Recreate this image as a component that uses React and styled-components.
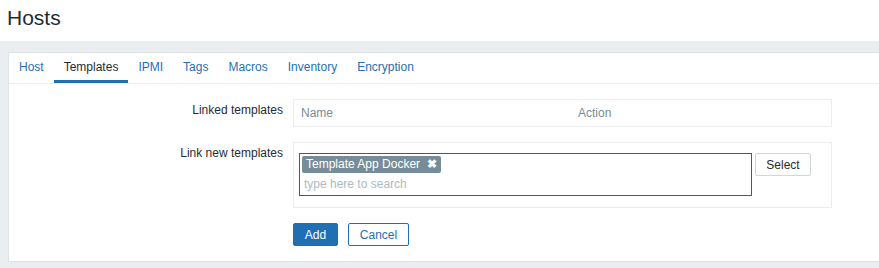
import React, { useState } from 'react';
import styled, { createGlobalStyle } from 'styled-components';

const GlobalStyle = createGlobalStyle`
	html, body {
		margin: 0;
		padding: 0;
		background: #ffffff;
		font-family: 'Liberation Sans', Arial, sans-serif;
		font-size: 12px;
		color: #1f2c33;
		overflow: hidden;
	}
`;

const Header = styled.header`
	padding: 6px 0 11px 7px;
	background: #ffffff;
`;

const Title = styled.h1`
	margin: 0;
	font-size: 21px;
	line-height: 24px;
	font-weight: normal;
	color: #1f2c33;
`;

const Wrapper = styled.main`
	background: #ebeef0;
	padding: 11px 0 9px 8px;
`;

const Panel = styled.section`
	background: #ffffff;
	border: 1px solid #dfe4e7;
	border-right: none;
`;

const TabBar = styled.nav`
	display: flex;
	border-bottom: 1px solid #ebeef0;
`;

const Tab = styled.a`
	display: block;
	padding: 7px 10px 6px;
	line-height: 14px;
	border-bottom: 3px solid ${p => (p.$active ? '#1f6fb2' : 'transparent')};
	color: ${p => (p.$active ? '#1f2c33' : '#1f6fb2')};
	cursor: pointer;
	text-decoration: none;
`;

const Form = styled.div`
	display: grid;
	grid-template-columns: 274px 539px;
	column-gap: 10px;
	row-gap: 15px;
	padding: 15px 0 15px;
`;

const Label = styled.label`
	text-align: right;
	padding-top: 4px;
	line-height: 14px;
	color: #1f2c33;
`;

const FieldBox = styled.div`
	border: 1px solid #ebeef0;
	padding: ${p => p.$pad || '0'};
	display: flex;
	align-items: flex-start;
`;

const HeadCell = styled.div`
	width: ${p => p.$width};
	padding: 6px 7px;
	line-height: 14px;
	color: #768d99;
	box-sizing: border-box;
`;

const MultiSelect = styled.div`
	width: 453px;
	height: 43px;
	box-sizing: border-box;
	border: 1px solid #2c6283;
	padding: 2px 2px;
`;

const Chip = styled.span`
	display: inline-flex;
	align-items: center;
	height: 17px;
	padding: 0 4px 0 4px;
	background: #768d99;
	color: #ffffff;
	line-height: 17px;
	border-radius: 2px;
`;

const ChipRemove = styled.span`
	margin-left: 7px;
	font-size: 12px;
	font-weight: bold;
	line-height: 17px;
	cursor: pointer;
`;

const SearchInput = styled.input`
	display: block;
	border: none;
	outline: none;
	margin: 3px 0 0 2px;
	padding: 0;
	width: 400px;
	height: 16px;
	font-family: inherit;
	font-size: 12px;
	color: #1f2c33;

	&::placeholder {
		color: #acbbc2;
	}
`;

const Button = styled.button`
	height: 23px;
	box-sizing: border-box;
	padding: 0 ${p => p.$padX || '10px'};
	font-family: inherit;
	font-size: 12px;
	border-radius: 2px;
	cursor: pointer;
	border: 1px solid ${p => (p.$variant === 'primary' ? '#1f6fb2' : p.$variant === 'outline' ? '#1f6fb2' : '#cfd7db')};
	background: ${p => (p.$variant === 'primary' ? '#1f6fb2' : '#ffffff')};
	color: ${p => (p.$variant === 'primary' ? '#ffffff' : p.$variant === 'outline' ? '#1f6fb2' : '#1f2c33')};
`;

const SelectButton = styled(Button)`
	margin-left: 3px;
	width: 56px;
`;

const Actions = styled.div`
	display: flex;
	gap: 10px;
`;

const tabs = ['Host', 'Templates', 'IPMI', 'Tags', 'Macros', 'Inventory', 'Encryption'];

const App = () => {
	const [activeTab, setActiveTab] = useState('Templates');
	const [linked, setLinked] = useState(['Template App Docker']);

	return (
		<>
			<GlobalStyle />
			<Header>
				<Title>Hosts</Title>
			</Header>
			<Wrapper>
				<Panel>
					<TabBar>
						{tabs.map(tab => (
							<Tab
								key={tab}
								$active={tab === activeTab}
								onClick={() => setActiveTab(tab)}>
								{tab}
							</Tab>
						))}
					</TabBar>
					<Form>
						<Label>Linked templates</Label>
						<FieldBox>
							<HeadCell $width='277px'>Name</HeadCell>
							<HeadCell $width='200px'>Action</HeadCell>
						</FieldBox>

						<Label>Link new templates</Label>
						<FieldBox $pad='10px 5px 11px 5px'>
							<MultiSelect>
								{linked.map(name => (
									<Chip key={name}>
										{name}
										<ChipRemove
											onClick={() => setLinked(linked.filter(n => n !== name))}>
											✖
										</ChipRemove>
									</Chip>
								))}
								<SearchInput placeholder='type here to search' />
							</MultiSelect>
							<SelectButton>Select</SelectButton>
						</FieldBox>

						<div />
						<Actions>
							<Button $variant='primary' style={{ width: 45 }}>
								Add
							</Button>
							<Button $variant='outline' style={{ width: 61 }}>
								Cancel
							</Button>
						</Actions>
					</Form>
				</Panel>
			</Wrapper>
		</>
	);
};

export default App;
